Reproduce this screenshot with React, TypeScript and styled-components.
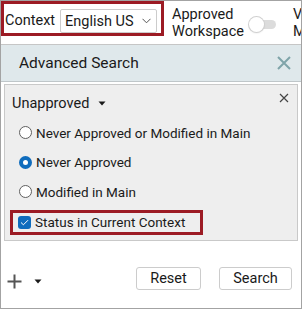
import React, { useState } from "react";
import styled, { createGlobalStyle } from "styled-components";

const GlobalStyle = createGlobalStyle`
  body {
    margin: 0;
    background: #ffffff;
    font-family: Roboto, "Liberation Sans", sans-serif;
    color: #1a1a1a;
  }
`;

const Frame = styled.div`
  width: 302px;
  height: 309px;
  box-sizing: border-box;
  border: 1px solid #a3a3a3;
  display: flex;
  flex-direction: column;
  overflow: hidden;
`;

const TopBar = styled.div`
  height: 43px;
  flex-shrink: 0;
  display: flex;
  align-items: flex-start;
  border-bottom: 1px solid #c6c6c6;
  font-size: 14.5px;
  white-space: nowrap;
`;

const ContextGroup = styled.div`
  box-sizing: border-box;
  flex-shrink: 0;
  width: 163px;
  height: 35px;
  border: 3px solid #9c1b24;
  display: flex;
  align-items: flex-end;
  gap: 5px;
  padding: 0 4px 0 1px;
`;

const ContextLabel = styled.span`
  line-height: 24px;
  width: 50px;
`;

const Select = styled.div`
  box-sizing: border-box;
  flex: 1;
  height: 24px;
  border: 1px solid #cccccc;
  border-radius: 2px;
  display: flex;
  align-items: center;
  justify-content: space-between;
  padding: 0 5px 0 4px;
  color: #1a1a1a;
`;

const ToggleGroup = styled.div<{ $ml: number }>`
  flex-shrink: 0;
  display: flex;
  align-items: center;
  gap: 6px;
  margin: 5px 0 0 ${(p) => p.$ml}px;
`;

const TwoLine = styled.span`
  line-height: 17px;
  white-space: pre;
`;

const Track = styled.div<{ $on: boolean }>`
  position: relative;
  width: 26px;
  height: 9px;
  border-radius: 5px;
  background: ${(p) => (p.$on ? "#0f6cbd" : "#dcdcdc")};
  margin-top: 3px;
`;

const Knob = styled.div<{ $on: boolean }>`
  position: absolute;
  top: -3px;
  left: ${(p) => (p.$on ? "12px" : "-1px")};
  width: 15px;
  height: 15px;
  border-radius: 50%;
  background: #fff;
  box-shadow: 0 0 0 1px #d0d0d0, 0 1px 2px rgba(0, 0, 0, 0.15);
`;

const Header = styled.div`
  height: 36px;
  flex-shrink: 0;
  display: flex;
  align-items: center;
  justify-content: space-between;
  padding: 0 9px 0 18px;
  background: #dfe8eb;
  border-bottom: 1px solid #bfc6c9;
  font-size: 15.5px;
`;

const CloseButton = styled.button`
  border: none;
  background: none;
  padding: 0;
  display: flex;
  cursor: pointer;
`;

const Body = styled.div`
  flex: 1;
  display: flex;
  flex-direction: column;
  padding: 2px 3px 0 3px;
`;

const FilterBox = styled.div`
  box-sizing: border-box;
  height: 157px;
  border: 1px solid #c9c9c9;
  background: #eeeeee;
  display: flex;
  flex-direction: column;
  font-size: 13.5px;
`;

const FilterHead = styled.div`
  display: flex;
  align-items: center;
  justify-content: space-between;
  padding: 6px 8px 0 7px;
  height: 24px;
`;

const FilterTitle = styled.span`
  display: flex;
  align-items: center;
  gap: 9px;
  font-size: 14.5px;
`;

const SmallClose = styled.span`
  align-self: flex-start;
  display: flex;
  margin-top: 2px;
`;

const Options = styled.div`
  display: flex;
  flex-direction: column;
  padding: 3px 0 0 5px;
`;

const OptionRow = styled.label`
  height: 29.5px;
  display: flex;
  align-items: center;
  gap: 4px;
  padding-left: 9px;
  cursor: pointer;
`;

const Radio = styled.span<{ $checked: boolean }>`
  box-sizing: border-box;
  width: 13px;
  height: 13px;
  border-radius: 50%;
  border: ${(p) => (p.$checked ? "4px solid #0f6cbd" : "1px solid #5f5f5f")};
  background: #fff;
`;

const Highlight = styled.div`
  box-sizing: border-box;
  align-self: flex-start;
  margin: 3px 0 0 5px;
  height: 25px;
  width: 193px;
  border: 3px solid #9c1b24;
  display: flex;
  align-items: center;
  gap: 4px;
  padding-left: 5px;
`;

const CheckBox = styled.span`
  width: 13px;
  height: 13px;
  border-radius: 3px;
  background: #0f6cbd;
  display: flex;
  align-items: center;
  justify-content: center;
`;

const Footer = styled.div`
  flex: 1;
  display: flex;
  align-items: flex-end;
  justify-content: space-between;
  padding: 0 6px 18px 3px;
`;

const AddGroup = styled.div`
  display: flex;
  align-items: center;
  gap: 12px;
  padding-bottom: 1px;
`;

const Buttons = styled.div`
  display: flex;
  gap: 18px;
`;

const Button = styled.button<{ $w: number }>`
  box-sizing: border-box;
  width: ${(p) => p.$w}px;
  height: 23px;
  border: 1px solid #cccccc;
  border-radius: 3px;
  background: #fff;
  font-family: inherit;
  font-size: 14.5px;
  color: #1a1a1a;
  padding: 0;
`;

const Caret = ({ color = "#1a1a1a" }: { color?: string }) => (
  <svg width="8" height="5" viewBox="0 0 8 5">
    <path d="M0.5 0.5h7L4 4.5z" fill={color} />
  </svg>
);

const options = ["Never Approved or Modified in Main", "Never Approved", "Modified in Main"];

export default function App() {
  const [selected, setSelected] = useState(1);
  const [approved, setApproved] = useState(false);

  return (
    <>
      <GlobalStyle />
      <Frame>
        <TopBar>
          <ContextGroup>
            <ContextLabel>Context</ContextLabel>
            <Select>
              English US
              <svg width="9" height="6" viewBox="0 0 9 6">
                <path d="M0.5 0.8L4.5 4.8L8.5 0.8" stroke="#555" strokeWidth="1" fill="none" />
              </svg>
            </Select>
          </ContextGroup>
          <ToggleGroup $ml={8} onClick={() => setApproved(!approved)}>
            <TwoLine>{"Approved\nWorkspace"}</TwoLine>
            <Track $on={approved}>
              <Knob $on={approved} />
            </Track>
          </ToggleGroup>
          <ToggleGroup $ml={17}>
            <TwoLine>{"View\nMode"}</TwoLine>
          </ToggleGroup>
        </TopBar>
        <Header>
          Advanced Search
          <CloseButton>
            <svg width="16" height="16" viewBox="0 0 16 16">
              <path d="M2 2L14 14M14 2L2 14" stroke="#7fa4a9" strokeWidth="2" />
            </svg>
          </CloseButton>
        </Header>
        <Body>
          <FilterBox>
            <FilterHead>
              <FilterTitle>
                Unapproved
                <Caret />
              </FilterTitle>
              <SmallClose>
                <svg width="10" height="10" viewBox="0 0 10 10">
                  <path d="M1 1L9 9M9 1L1 9" stroke="#444" strokeWidth="1.2" />
                </svg>
              </SmallClose>
            </FilterHead>
            <Options>
              {options.map((o, i) => (
                <OptionRow key={o} onClick={() => setSelected(i)}>
                  <Radio $checked={selected === i} />
                  {o}
                </OptionRow>
              ))}
            </Options>
            <Highlight>
              <CheckBox>
                <svg width="9" height="7" viewBox="0 0 9 7">
                  <path d="M1 3.5L3.4 5.8L8 1.2" stroke="#fff" strokeWidth="1" fill="none" />
                </svg>
              </CheckBox>
              Status in Current Context
            </Highlight>
          </FilterBox>
          <Footer>
            <AddGroup>
              <svg width="15" height="15" viewBox="0 0 15 15">
                <path d="M7.5 0.5v14M0.5 7.5h14" stroke="#555" strokeWidth="2" />
              </svg>
              <Caret />
            </AddGroup>
            <Buttons>
              <Button $w={65}>Reset</Button>
              <Button $w={73}>Search</Button>
            </Buttons>
          </Footer>
        </Body>
      </Frame>
    </>
  );
}
